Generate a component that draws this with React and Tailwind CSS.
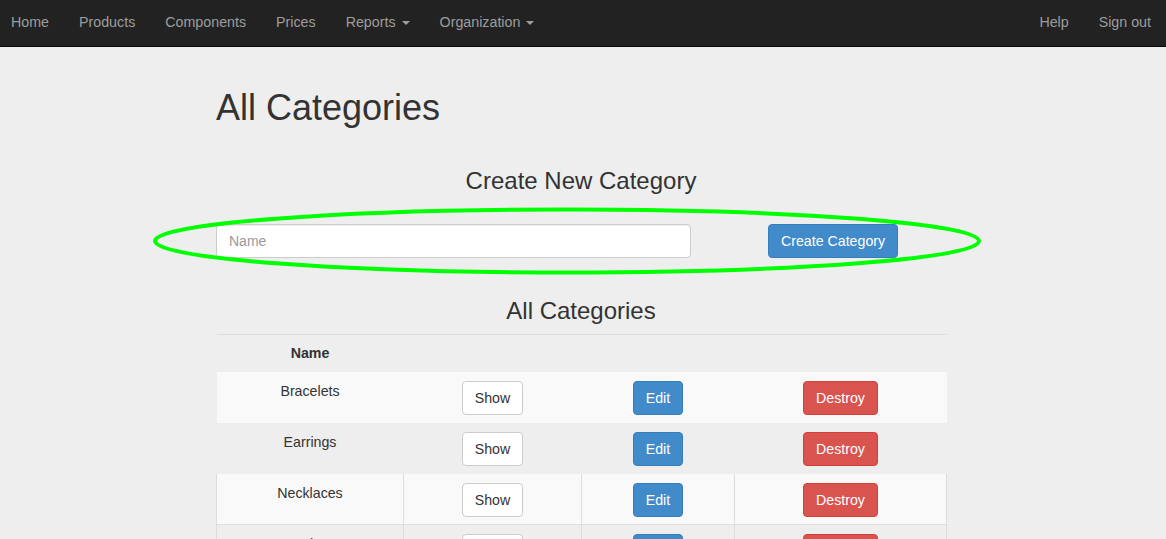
import React from 'react';

const rows = [
    { name: 'Bracelets', bg: 'bg-[#f9f9f9]', bordered: false },
    { name: 'Earrings', bg: 'bg-transparent', bordered: false },
    { name: 'Necklaces', bg: 'bg-[#f9f9f9]', bordered: true },
    { name: 'Pendants', bg: 'bg-transparent', bordered: true },
];

const Caret = () => (
    <span className="inline-block ml-[6px] align-middle w-0 h-0 border-x-[4px] border-x-transparent border-t-[4px] border-t-[#9d9d9d]" />
);

const NavLink = ({ children }) => (
    <a className="block px-[15px] leading-[45px] text-[14.25px] text-[#9d9d9d] cursor-pointer">{children}</a>
);

const Navbar = () => (
    <nav className="h-[47px] bg-[#222] border-b border-[#080808] flex justify-between">
        <div className="flex -ml-[4px]">
            <NavLink>Home</NavLink>
            <NavLink>Products</NavLink>
            <NavLink>Components</NavLink>
            <NavLink>Prices</NavLink>
            <NavLink>Reports<Caret /></NavLink>
            <NavLink>Organization<Caret /></NavLink>
        </div>
        <div className="flex">
            <NavLink>Help</NavLink>
            <NavLink>Sign out</NavLink>
        </div>
    </nav>
);

const Btn = ({ kind, children }) => {
    const styles = {
        default: 'bg-white border-[#ccc] text-[#333]',
        primary: 'bg-[#428bca] border-[#357ebd] text-white',
        danger: 'bg-[#d9534f] border-[#d43f3a] text-white',
    };
    return (
        <button className={`inline-block h-[34px] px-[12px] text-[14.2px] leading-[20px] border rounded-[4px] ${styles[kind]}`}>
            {children}
        </button>
    );
};

export default function App() {
    return (
        <div className="min-h-[539px] bg-[#eee] text-[#333] font-['Liberation_Sans',Arial,sans-serif]">
            <Navbar />

            <div className="ml-[216px] w-[730px] relative">
                <h1 className="mt-[41px] text-[36px] leading-[1.1]">All Categories</h1>

                <h3 className="mt-[40px] text-[24px] leading-[1.1] text-center">Create New Category</h3>

                <div className="mt-[30px] flex items-center">
                    <input
                        placeholder="Name"
                        className="w-[475px] h-[34px] px-[12px] text-[14px] bg-white border border-[#ccc] rounded-[4px] shadow-[inset_0_1px_1px_rgba(0,0,0,0.075)] placeholder:text-[#999] outline-none"
                    />
                    <div className="ml-[77px]">
                        <Btn kind="primary">Create Category</Btn>
                    </div>
                </div>

                {/* hand-drawn highlight round the form */}
                <svg className="absolute left-[-64px] top-[118px] pointer-events-none" width="832" height="70" viewBox="0 0 832 70">
                    <ellipse cx="415" cy="35" rx="412" ry="31.5" fill="none" stroke="#00ff00" strokeWidth="4" />
                </svg>

                <h3 className="mt-[40px] text-[24px] leading-[1.1] text-center">All Categories</h3>

                <table className="mt-[10px] w-full border-collapse text-[14.2px] leading-[20px] table-fixed">
                    <colgroup>
                        <col className="w-[187px]" />
                        <col className="w-[178px]" />
                        <col className="w-[153px]" />
                        <col className="w-[212px]" />
                    </colgroup>
                    <thead>
                        <tr className="border-t border-[#ddd]">
                            <th className="p-[8px] text-center font-bold">Name</th>
                            <th className="p-[8px]" />
                            <th className="p-[8px]" />
                            <th className="p-[8px]" />
                        </tr>
                    </thead>
                    <tbody>
                        {rows.map(r => {
                            const cell = `px-[8px] pt-[9px] pb-[7px] text-center ${r.bordered ? 'border border-[#ddd]' : 'border border-transparent'}`;
                            return (
                                <tr key={r.name} className={r.bg}>
                                    <td className={`${cell} align-top`}>{r.name}</td>
                                    <td className={`${cell} align-top`}><Btn kind="default">Show</Btn></td>
                                    <td className={`${cell} align-top`}><Btn kind="primary">Edit</Btn></td>
                                    <td className={`${cell} align-top`}><Btn kind="danger">Destroy</Btn></td>
                                </tr>
                            );
                        })}
                    </tbody>
                </table>
            </div>
        </div>
    );
}
